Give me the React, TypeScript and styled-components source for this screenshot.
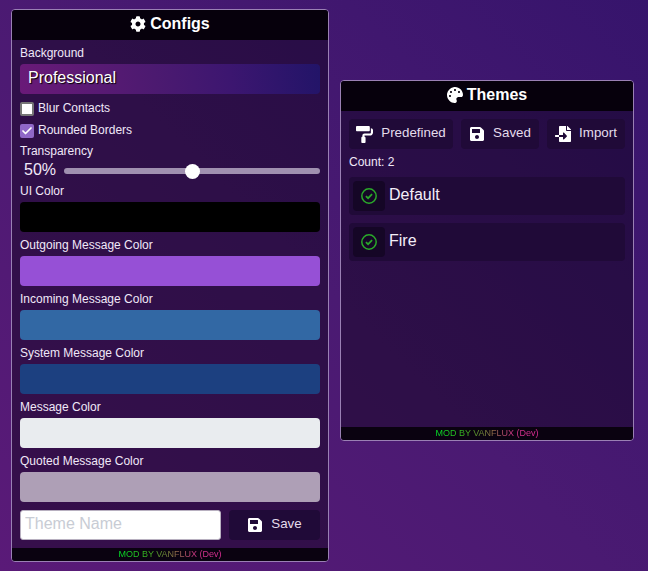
import React from 'react';
import styled, { createGlobalStyle } from 'styled-components';
import { FaCog, FaFileImport, FaPaintRoller, FaPalette, FaSave } from 'react-icons/fa';
import { FiCheck } from 'react-icons/fi';

const GlobalStyle = createGlobalStyle`
  html, body {
    margin: 0;
    height: 571px;
    overflow: hidden;
  }
  body {
    background: linear-gradient(45deg, #5a1a78 0%, #4a1a72 50%, #36146c 100%);
    font-family: "Liberation Sans", Arial, sans-serif;
    color: #f0e8f8;
  }
`;

const Desktop = styled.div`
  display: flex;
  align-items: flex-start;
  gap: 11px;
  padding: 9px 0 0 11px;
`;

const Window = styled.section<{ $width: number; $height: number; $top?: number }>`
  box-sizing: border-box;
  width: ${(p) => p.$width}px;
  height: ${(p) => p.$height}px;
  margin-top: ${(p) => p.$top ?? 0}px;
  display: flex;
  flex-direction: column;
  background: rgba(6, 0, 14, 0.42);
  border: 1px solid #9a80b4;
  border-radius: 4px;
  overflow: hidden;
`;

const WindowTitle = styled.header`
  flex: none;
  height: 30px;
  padding-bottom: 2px;
  box-sizing: border-box;
  display: flex;
  align-items: center;
  justify-content: center;
  gap: 4px;
  background: #06000c;
  color: #fff;
  font-size: 16px;
  font-weight: 700;
`;

const WindowBody = styled.div`
  flex: 1;
  min-height: 0;
  display: flex;
  flex-direction: column;
  padding: 6px 8px;
`;

const Credit = styled.footer`
  flex: none;
  height: 13px;
  line-height: 12px;
  text-align: center;
  font-size: 9px;
  background: #0a0210;
  span {
    background: linear-gradient(90deg, #00e828 0%, #40b020 30%, #907048 55%, #d03488 75%, #e02e98 100%);
    -webkit-background-clip: text;
    background-clip: text;
    color: transparent;
  }
`;

const Label = styled.div`
  height: 14px;
  line-height: 14px;
  font-size: 12px;
  color: #f0e8f8;
`;

const SliderLabel = styled(Label)`
  margin-top: 6px;
`;

const ColorField = styled.div<{ $color: string }>`
  height: 30px;
  margin: 4px 0 6px;
  border-radius: 4px;
  background: ${(p) => p.$color};
`;

const BackgroundSelect = styled.div`
  height: 30px;
  margin-top: 4px;
  padding-left: 8px;
  border-radius: 4px;
  font-size: 16px;
  line-height: 27px;
  color: #fff;
  text-shadow: 1px 1px 1px #000;
  background: linear-gradient(80deg, #6a1a78 0%, #4c1a70 45%, #3c1670 70%, #221468 100%);
`;

const CheckRow = styled.label`
  height: 14px;
  line-height: 12px;
  margin-top: 8px;
  display: flex;
  align-items: flex-start;
  gap: 4px;
  font-size: 12px;
`;

const CheckBox = styled.span<{ $checked?: boolean }>`
  box-sizing: border-box;
  width: 14px;
  height: 14px;
  display: flex;
  align-items: center;
  justify-content: center;
  border-radius: 2px;
  color: #fff;
  background: ${(p) => (p.$checked ? '#9068c8' : '#fff')};
  border: ${(p) => (p.$checked ? 'none' : '2px solid #767676')};
`;

const SliderRow = styled.div`
  height: 26px;
  display: flex;
  align-items: center;
  gap: 8px;
  padding-left: 4px;
  font-size: 16px;
  line-height: 20px;
`;

const SliderValue = styled.span`
  margin-top: -3px;
`;

const SliderTrack = styled.div`
  flex: 1;
  height: 6px;
  position: relative;
  border-radius: 3px;
  background: #a090b0;
`;

const SliderThumb = styled.div`
  position: absolute;
  top: -4.5px;
  width: 15px;
  height: 15px;
  margin-left: -7.5px;
  border-radius: 50%;
  background: #fff;
`;

const FormRow = styled.div`
  display: flex;
  gap: 8px;
  margin-top: 2px;
`;

const NameInput = styled.input`
  box-sizing: border-box;
  flex: none;
  width: 201px;
  height: 30px;
  padding: 0 4px 3px;
  background: #fff;
  border: 1px solid #b8b0c0;
  border-radius: 3px;
  font: 16px "Liberation Sans", Arial, sans-serif;
  &::placeholder {
    color: #c8ccd4;
  }
`;

const ActionButton = styled.button<{ $width: number }>`
  box-sizing: border-box;
  flex: none;
  width: ${(p) => p.$width}px;
  height: 30px;
  display: flex;
  align-items: center;
  justify-content: center;
  gap: 8px;
  padding: 0;
  border: none;
  border-radius: 4px;
  background: #200a38;
  color: #e4dcec;
  font: 13.333px "Liberation Sans", Arial, sans-serif;
  span {
    margin-top: -4px;
  }
  svg {
    color: #fff;
  }
`;

const Toolbar = styled.div`
  margin-top: 2px;
  display: flex;
  justify-content: space-between;
`;

const CountText = styled.div`
  height: 14px;
  line-height: 12px;
  margin: 7px 0 7px;
  font-size: 12px;
`;

const ThemeList = styled.div`
  display: flex;
  flex-direction: column;
  gap: 8px;
`;

const ThemeRow = styled.div`
  height: 38px;
  display: flex;
  gap: 4px;
  padding: 4px;
  box-sizing: border-box;
  border-radius: 4px;
  background: #200a38;
  font-size: 16px;
  line-height: 28px;
  color: #f4eef8;
`;

const StatusButton = styled.div`
  width: 32px;
  height: 30px;
  display: flex;
  align-items: center;
  justify-content: center;
  border-radius: 4px;
  background: #150626;
`;

const CheckCircleIcon = () => (
  <svg width="16" height="16" viewBox="0 0 16 16" fill="none" stroke="#2aa82a" strokeWidth="1.5">
    <circle cx="8" cy="8" r="7.2" />
    <path d="M4.9 8.1l2.2 2.1L11.1 6.2" strokeWidth="1.7" />
  </svg>
);

const colorFields = [
  { label: 'UI Color', color: '#000000' },
  { label: 'Outgoing Message Color', color: '#9650d6' },
  { label: 'Incoming Message Color', color: '#3268a4' },
  { label: 'System Message Color', color: '#1c4080' },
  { label: 'Message Color', color: '#e9ecef' },
  { label: 'Quoted Message Color', color: '#ae9fb6' },
];

const themes = ['Default', 'Fire'];

export default function App() {
  return (
    <>
      <GlobalStyle />
      <Desktop>
        <Window $width={318} $height={553}>
          <WindowTitle>
            <FaCog size={16} /> Configs
          </WindowTitle>
          <WindowBody>
            <Label>Background</Label>
            <BackgroundSelect>Professional</BackgroundSelect>
            <CheckRow>
              <CheckBox /> Blur Contacts
            </CheckRow>
            <CheckRow>
              <CheckBox $checked>
                <FiCheck size={12} strokeWidth={3.5} />
              </CheckBox>
              Rounded Borders
            </CheckRow>
            <SliderLabel>Transparency</SliderLabel>
            <SliderRow>
              <SliderValue>50%</SliderValue>
              <SliderTrack>
                <SliderThumb style={{ left: '50%' }} />
              </SliderTrack>
            </SliderRow>
            {colorFields.map((field) => (
              <React.Fragment key={field.label}>
                <Label>{field.label}</Label>
                <ColorField $color={field.color} />
              </React.Fragment>
            ))}
            <FormRow>
              <NameInput placeholder="Theme Name" />
              <ActionButton $width={91}>
                <FaSave size={16} />
                <span>Save</span>
              </ActionButton>
            </FormRow>
          </WindowBody>
          <Credit>
            <span>MOD BY VANFLUX (Dev)</span>
          </Credit>
        </Window>
        <Window $width={294} $height={361} $top={71}>
          <WindowTitle>
            <FaPalette size={16} /> Themes
          </WindowTitle>
          <WindowBody>
            <Toolbar>
              <ActionButton $width={104}>
                <FaPaintRoller size={17} />
                <span>Predefined</span>
              </ActionButton>
              <ActionButton $width={78}>
                <FaSave size={16} />
                <span>Saved</span>
              </ActionButton>
              <ActionButton $width={78}>
                <FaFileImport size={16} />
                <span>Import</span>
              </ActionButton>
            </Toolbar>
            <CountText>Count: 2</CountText>
            <ThemeList>
              {themes.map((theme) => (
                <ThemeRow key={theme}>
                  <StatusButton>
                    <CheckCircleIcon />
                  </StatusButton>
                  {theme}
                </ThemeRow>
              ))}
            </ThemeList>
          </WindowBody>
          <Credit>
            <span>MOD BY VANFLUX (Dev)</span>
          </Credit>
        </Window>
      </Desktop>
    </>
  );
}
